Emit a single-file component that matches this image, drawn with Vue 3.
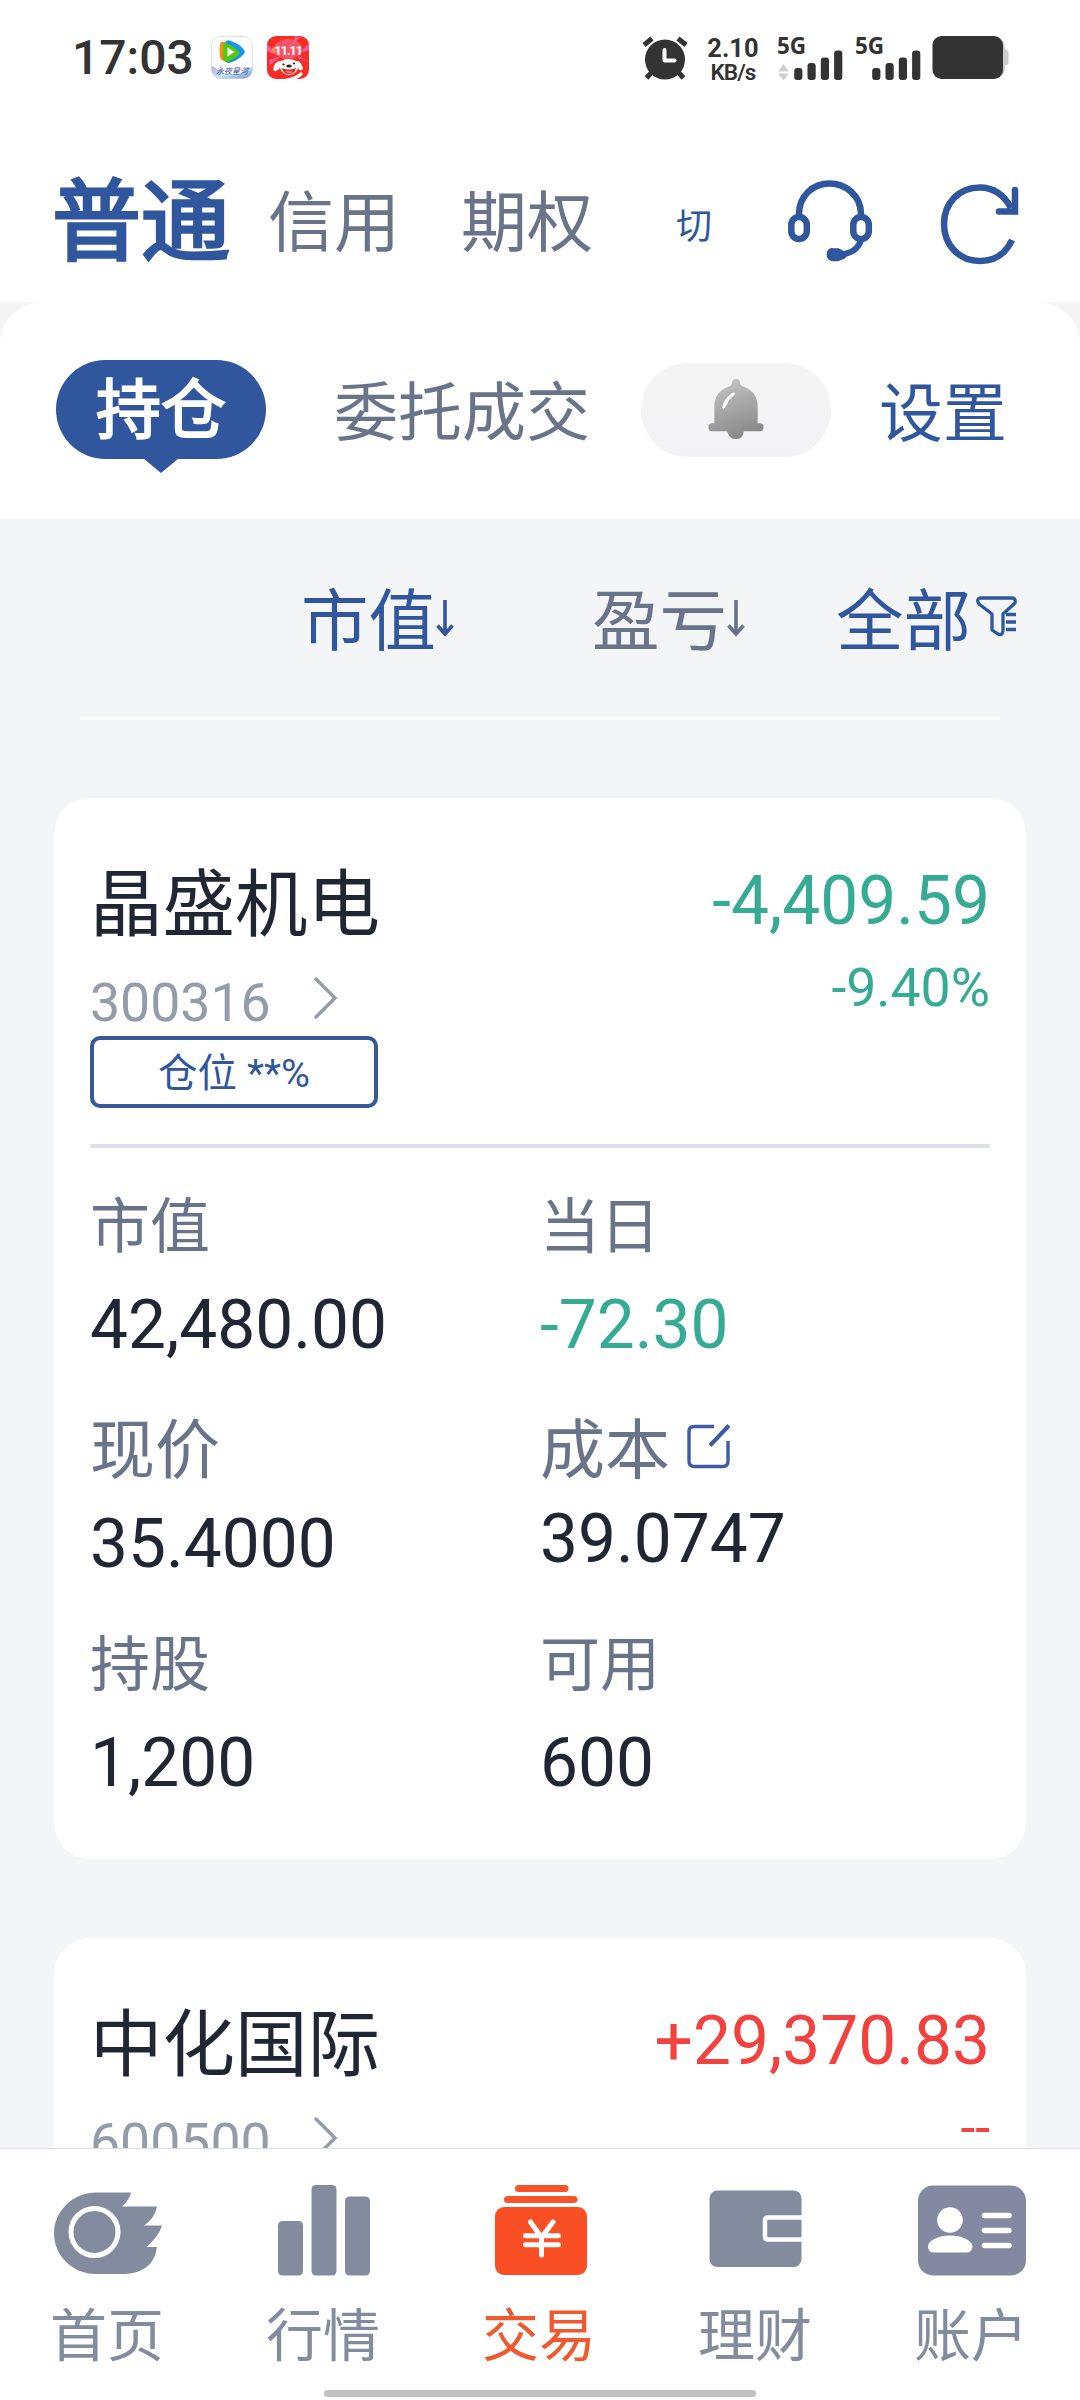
<script setup>
const bars = [12, 17, 22.5, 29.5]

const holdings = [
  {
    name: '晶盛机电',
    code: '300316',
    profit: '-4,409.59',
    rate: '-9.40%',
    trend: 'down',
    fields: [
      { label: '市值', value: '42,480.00' },
      { label: '当日', value: '-72.30', trend: 'down' },
      { label: '现价', value: '35.4000', size: 'large' },
      { label: '成本', value: '39.0747', size: 'large', edit: true },
      { label: '持股', value: '1,200' },
      { label: '可用', value: '600' },
    ],
  },
  {
    name: '中化国际',
    code: '600500',
    profit: '+29,370.83',
    rate: '--',
    trend: 'up',
    fields: [],
  },
]

const tabs = [
  { key: 'home', label: '首页' },
  { key: 'market', label: '行情' },
  { key: 'trade', label: '交易', active: true },
  { key: 'wealth', label: '理财' },
  { key: 'account', label: '账户' },
]
</script>

<template>
  <div class="screen">
    <div class="status">
      <span class="clock">17:03</span>
      <svg class="app-icon" width="42" height="43" viewBox="0 0 42 43">
        <defs>
          <clipPath id="videoClip"><rect x="0.5" y="0.5" width="41" height="42" rx="9" /></clipPath>
          <linearGradient id="wave" x1="0" x2="1" y1="0" y2="1">
            <stop offset="0" stop-color="#b9a5dc" />
            <stop offset="0.5" stop-color="#c5e6fa" />
            <stop offset="1" stop-color="#6f8fc4" />
          </linearGradient>
        </defs>
        <rect x="0.5" y="0.5" width="41" height="42" rx="9" fill="#fff" stroke="#e3e3e6" />
        <path clip-path="url(#videoClip)" d="M0 30Q5 31 8 36Q20 40 31 37Q35 31 42 31V43H0Z" fill="url(#wave)" />
        <path d="M9 8Q10 5 14 6V25Q10 25 9 21Q8 15 9 8Z" fill="#ff8a12" />
        <path d="M14 7Q15 3 20 5Q29 8 33 14Q35 16 32 19Q26 25 18 27Q14 27 14 22Z" fill="#1595ee" />
        <path d="M12 9Q13 6 17 8Q24 11 28 15Q29 16 28 18Q23 24 15 26Q12 25 12 22Z" fill="#52c90e" />
        <path d="M16.500 11.500L23.500 16L16.500 20.500Z" fill="#fff" />
        <text x="5" y="38" font-size="8" font-style="italic" fill="#2f489b">永夜星河</text>
      </svg>
      <svg class="app-icon second" width="42" height="43" viewBox="0 0 42 43">
        <defs><clipPath id="shopClip"><rect width="42" height="43" rx="9" /></clipPath></defs>
        <g clip-path="url(#shopClip)">
          <rect width="42" height="43" fill="#f52d24" />
          <path d="M0 8L12 20L0 15ZM2 24L14 20L3 29ZM30 18L42 8V14ZM28 0L25 10L33 1ZM31 22L42 26L32 20Z" fill="#f45aa2" />
          <circle cx="8" cy="14" r="3" fill="#ff9440" />
          <ellipse cx="21" cy="13" rx="14" ry="10" fill="#f46582" opacity=".7" />
          <path d="M14 25Q21 21 29 25Q34 24 36 33Q33 36 31 32Q29 38 22 39Q15 38 13 32Q9 37 6 34Q7 25 14 25Z" fill="#fff" />
          <path d="M17 43Q27 42 34 36L36 38Q32 43 28 43Z" fill="#fff" />
          <path d="M15 32Q22 35 29 32Q28 38 22 38Q16 38 15 32Z" fill="#d22625" />
          <path d="M18 35Q22 34 26 36Q22 39 18 35Z" fill="#ff806e" />
          <ellipse cx="22" cy="30" rx="2.800" ry="1.600" fill="#222" />
          <circle cx="16.500" cy="28.500" r="1.100" fill="#222" />
          <circle cx="27" cy="27.500" r="1.100" fill="#222" />
        </g>
        <text x="21" y="19" font-size="13" font-weight="700" fill="#fff" text-anchor="middle" letter-spacing="-1.200">11.11</text>
      </svg>
      <span class="spacer"></span>
      <svg class="alarm" width="46" height="44" viewBox="0 0 46 44">
        <circle cx="23" cy="23.500" r="20" fill="#333" />
        <path d="M2 9L10 2.500M44 9L36 2.500" stroke="#333" stroke-width="5" />
        <path d="M9 37L4.500 42M37 37L41.500 42" stroke="#333" stroke-width="5" />
        <path d="M22.500 14V24.500H32.500" fill="none" stroke="#fff" stroke-width="4" stroke-linecap="round" stroke-linejoin="round" />
      </svg>
      <div class="speed"><b>2.10</b><small>KB/s</small></div>
      <svg class="signal" width="66" height="56" viewBox="0 -12 66 56">
        <text x="0" y="17.500" class="gen">5G</text>
        <path d="M1 35.500L6.500 28L12 35.500ZM1 37.500H12L6.500 44.500Z" fill="#d0d0d0" />
        <rect v-for="(h, i) in bars" :key="i" :x="17.200 + i * 13.300" :y="44 - h" width="8.200" :height="h" rx="3" fill="#333" />
      </svg>
      <svg class="signal next" width="66" height="56" viewBox="0 -12 66 56">
        <text x="0" y="17.500" class="gen">5G</text>
        <rect v-for="(h, i) in bars" :key="i" :x="17.200 + i * 13.300" :y="44 - h" width="8.200" :height="h" rx="3" fill="#333" />
      </svg>
      <svg class="battery" width="77" height="43" viewBox="0 0 77 43">
        <path d="M69 4Q73 6 73 13.500H74Q76.500 14 76.500 17V26Q76.500 29 74 29.500H73Q73 38 69 40Z" fill="#ccc" />
        <rect x="0.500" width="70.500" height="43" rx="9" fill="#333" />
      </svg>
    </div>

    <header class="header">
      <span class="account on">普通</span>
      <span class="account">信用</span>
      <span class="account last">期权</span>
      <span class="switch">切</span>
      <svg class="headset" width="86" height="84" viewBox="0 0 86 84" fill="none" stroke="#30569d">
        <path d="M12 38V35C12 17 26 4.500 42.500 4.500S74 17 74 35V38" stroke-width="6.500" />
        <rect x="4.300" y="38" width="15.500" height="22" rx="7.700" stroke-width="6.500" />
        <rect x="66.300" y="38" width="15.500" height="22" rx="7.700" stroke-width="6.500" />
        <path d="M74 61C71 70 65 74.500 52 76" stroke-width="6" />
        <path d="M45 70H51L58 73.500V78.500L51 81.500H45A6.200 6.200 0 0 1 45 69.500Z" fill="#30569d" stroke-width="1.500" stroke-linejoin="round" />
      </svg>
      <svg class="refresh" width="82" height="84" viewBox="0 0 82 84" fill="none" stroke="#30569d" stroke-width="6.500">
        <path d="M72 27C65 14 55 6.500 41 6.500C20 6.500 5 22 5 43S20 80 41 80C54 80 66 74 73 59" />
        <path d="M76 9V30.500H60" stroke-linecap="round" />
      </svg>
    </header>

    <div class="sheet-back">
      <div class="sheet">
        <div class="pill">持仓</div>
        <span class="orders">委托成交</span>
        <div class="bell">
          <svg width="58" height="63" viewBox="0 0 58 64">
            <defs>
              <linearGradient id="bellFill" x1="0" x2="0.300" y1="0" y2="1">
                <stop offset="0" stop-color="#c8c8c8" />
                <stop offset="1" stop-color="#8c8c8c" />
              </linearGradient>
            </defs>
            <path d="M25 5Q25 1 29 1T33 5Q33 7 35 8Q51 13 51 29V46H53Q57 46 57 50T53 54H37Q36 62 29 62T20 54H5Q1 54 1 50T5 46H7V29Q7 13 23 8Q25 7 25 5Z" fill="url(#bellFill)" />
            <path d="M15.500 30Q17 21 25 16Q29 14 27 17Q21 21 18 29Q16 33 15.500 30Z" fill="#fff" stroke="#fff" stroke-width="1" />
          </svg>
        </div>
        <span class="setting">设置</span>
      </div>
    </div>

    <main class="content">
      <div class="sort">
        <span class="sort-item by-value">市值<svg width="18" height="38" viewBox="0 0 18 38"><path d="M9 1V35M1.500 26.500L9 35L16.500 26.500" fill="none" stroke="currentColor" stroke-width="3.600" /></svg></span>
        <span class="sort-item by-gain">盈亏<svg width="18" height="38" viewBox="0 0 18 38"><path d="M9 1V35M1.500 26.500L9 35L16.500 26.500" fill="none" stroke="currentColor" stroke-width="3.600" /></svg></span>
        <span class="sort-item">全部<svg class="funnel" width="41" height="42" viewBox="0 0 41 42" fill="none" stroke="currentColor" stroke-width="3.300"><path d="M4 2H36Q40 2 39 7L27 18V35Q26 40 22 38L16 34V18L3 8Q0 3 4 2Z" stroke-linejoin="round" /><path d="M30 18.500H40M30 26H40M30 33.500H40" /></svg></span>
      </div>
      <div class="sort-line"></div>

      <section v-for="h in holdings" :key="h.code" class="card">
        <div class="card-head">
          <div>
            <div class="name">{{ h.name }}</div>
            <div class="code">
              {{ h.code }}
              <svg width="24" height="42" viewBox="0 0 24 42"><path d="M2 2L21 21L2 40" fill="none" stroke="#949caa" stroke-width="3.400" stroke-linecap="round" /></svg>
            </div>
            <div class="tag">仓位 **%</div>
          </div>
          <div class="result" :class="h.trend">
            <div class="profit">{{ h.profit }}</div>
            <div class="rate">{{ h.rate }}</div>
          </div>
        </div>
        <div class="divider"></div>
        <div class="fields">
          <div v-for="f in h.fields" :key="f.label" class="field" :class="[f.size, { edit: f.edit }]">
            <div class="label">
              {{ f.label }}
              <svg v-if="f.edit" width="44" height="46" viewBox="0 0 44 46" fill="none" stroke="#3c5ca3" stroke-width="3.400">
                <path d="M27 3.500H7Q2 3.500 2 8.500V38Q2 43.500 7 43.500H36Q41 43.500 41 38V18" />
                <path d="M42 2.500L23 22.500" stroke-width="4" />
              </svg>
            </div>
            <div class="value" :class="f.trend">{{ f.value }}</div>
          </div>
        </div>
      </section>
    </main>

    <nav class="tabbar">
      <div v-for="t in tabs" :key="t.key" class="tab" :class="{ active: t.active }">
        <svg width="108" height="92" viewBox="0 0 108 92">
          <g v-if="t.key === 'home'">
            <path d="M42 8.500H77Q76 15 68 22.500H103Q101 34 90 41.500H108Q105 52 92.500 63H103Q100 88 71 90H42C18 90 0 71 0 49.500S18 8.500 42 8.500Z" fill="#838b9e" />
            <circle cx="40.500" cy="48" r="23.500" fill="none" stroke="#fff" stroke-width="5" />
          </g>
          <g v-else-if="t.key === 'market'" fill="#838b9e">
            <rect x="8" y="37" width="25" height="54.500" rx="4.500" />
            <rect x="41.500" y="1" width="25" height="90.500" rx="4.500" />
            <rect x="75" y="12.500" width="25" height="79" rx="4.500" />
          </g>
          <g v-else-if="t.key === 'trade'">
            <rect x="29" y="1" width="53.500" height="7" rx="3.500" fill="#f9532b" />
            <rect x="18" y="12" width="73.500" height="7" rx="3.500" fill="#f9532b" />
            <rect x="9" y="23" width="92" height="68" rx="9" fill="#fa4e25" />
            <path d="M44.500 38L55.500 53.500L67 38M55.500 53.500V71M39.500 51.700H72.500M39.500 60.700H72.500" fill="none" stroke="#fff" stroke-width="5" stroke-linecap="round" />
          </g>
          <g v-else-if="t.key === 'wealth'">
            <rect x="7.500" y="6.500" width="92" height="76.500" rx="8" fill="#838b9e" />
            <path d="M100 33.500H66Q63 33.500 63 36.500V52.500Q63 55.500 66 55.500H100" fill="none" stroke="#fff" stroke-width="4.500" />
          </g>
          <g v-else>
            <rect y="1.500" width="108" height="90" rx="15" fill="#8389a0" />
            <circle cx="32" cy="36" r="12.800" fill="#fff" />
            <path d="M10 63C10 56 21 51.500 32 51.500S54.500 56 54.500 63Q54 68.500 48 68.500H16Q10.500 68.500 10 63Z" fill="#fff" />
            <path d="M66.500 31.500H91M66.500 46.500H91M66.500 61.500H91" stroke="#fff" stroke-width="5.500" stroke-linecap="round" />
          </g>
        </svg>
        <span>{{ t.label }}</span>
      </div>
      <i class="indicator"></i>
    </nav>
  </div>
</template>

<style>
body { margin: 0; background: #fff; }
</style>

<style scoped>
.screen {
  width: 1080px;
  height: 2400px;
  display: flex;
  flex-direction: column;
  overflow: hidden;
  background: #fff;
  color: #202633;
  font-family: Roboto, "Noto Sans CJK SC", sans-serif;
  white-space: nowrap;
}
svg { display: block; flex: none; }
.status {
  height: 110px;
  flex: none;
  display: flex;
  align-items: flex-start;
  padding: 36px 71px 0 72px;
  box-sizing: border-box;
  color: #333;
}
.clock { width: 139px; font-size: 48px; line-height: 43px; font-weight: 500; }
.app-icon.second { margin-left: 14px; }
.spacer { flex: 1; }
.alarm { margin-right: 18px; }
.speed { width: 54px; display: flex; flex-direction: column; align-items: center; margin-right: 17px; }
.speed b { font-size: 25.500px; line-height: 24px; font-weight: 700; }
.speed small { font-size: 22.500px; line-height: 24px; font-weight: 600; letter-spacing: -0.900px; }
.gen { font: 700 22.500px "Noto Sans", sans-serif; fill: #333; }
.signal { margin-top: -12px; }
.signal.next { margin-left: 12px; }
.battery { margin-left: 11px; }

.header { height: 192px; flex: none; display: flex; align-items: center; padding: 36px 0 0 53px; box-sizing: border-box; }
.account { width: 193px; font-size: 66px; line-height: 90px; color: #697389; }
.account.on { width: 216px; margin-left: -1px; padding-bottom: 3px; font-size: 89px; color: #30569d; -webkit-text-stroke: 3px #30569d; }
.account.last { width: 215px; }
.switch { width: 111px; font-size: 36px; line-height: 40px; color: #30569d; padding-top: 5px; }
.headset { margin-top: -6px; }
.refresh { margin: -3px 0 0 66px; }

.sheet-back { flex: none; background: #f4f4f4; }
.sheet { height: 217px; display: flex; align-items: center; padding: 0 0 2px 56px; box-sizing: border-box; background: #fff; border-radius: 42px 42px 0 0; }
.pill { position: relative; width: 210px; height: 99px; margin-right: 68px; border-radius: 50px; background: #30569d; color: #fff; font-size: 65px; line-height: 103px; text-align: center; -webkit-text-stroke: 2px #fff; }
.pill::after { content: ""; position: absolute; left: 87px; top: 98px; border: 18px solid transparent; border-top: 15px solid #30569d; border-bottom: 0; }
.orders { width: 307px; font-size: 64px; line-height: 80px; color: #697389; padding-top: 8px; }
.bell { width: 190px; height: 94px; border-radius: 47px; background: linear-gradient(#f4f4f4, #f3f3f6); display: flex; align-items: center; justify-content: center; margin-right: 48px; }
.setting { font-size: 64px; line-height: 80px; color: #30569d; padding-top: 11px; }

.content { flex: 1; min-height: 0; overflow: hidden; background: #f3f5f7; }
.sort { height: 198px; display: flex; align-items: center; padding: 7px 0 0 301px; box-sizing: border-box; }
.sort-item { display: flex; align-items: center; font-size: 67.500px; line-height: 80px; color: #30569d; }
.sort-item.by-value { width: 291px; }
.sort-item.by-gain { width: 244px; color: #697389; }
.sort-item svg { margin-top: -8px; }
.sort-item .funnel { margin: -10px 0 0 5px; }
.sort-line { height: 3px; margin: 0 80px; background: #fff; }

.card { height: 1061px; margin: 78px 54px 0; padding: 68px 36px 0; box-sizing: border-box; border-radius: 36px; background: #fff; }
.card + .card { margin-top: 79px; }
.card-head { display: flex; justify-content: space-between; height: 278px; }
.name { font-size: 72.500px; line-height: 80px; }
.code { display: flex; align-items: center; font-size: 53.600px; line-height: 60px; margin-top: 27px; color: #949caa; }
.code svg { margin: -10px 0 0 43px; }
.tag { width: 288px; height: 72px; margin-top: 3px; box-sizing: border-box; border: 4px solid #375998; border-radius: 10px; color: #30569d; font-size: 39.500px; line-height: 68px; text-align: center; }
.result { text-align: right; margin-top: -5px; }
.profit { font-size: 67.600px; line-height: 80px; }
.rate { font-size: 53.600px; line-height: 60px; margin-top: 17px; }
.down { color: #36ab94; }
.up { color: #f14240; }
.divider { height: 4px; background: #dfe1e8; }
.fields { display: grid; grid-template-columns: 450px 450px; grid-template-rows: 223px 215px 216px; padding-top: 50px; }
.label { display: flex; align-items: center; font-size: 60px; line-height: 60px; color: #697389; }
.large .label { font-size: 65px; }
.label svg { margin: -10px 0 0 17px; }
.value { margin-top: 27px; font-size: 67.600px; line-height: 80px; }
.large .value { margin-top: 23px; }
.edit .value { margin-top: 18px; }

.tabbar { position: relative; flex: none; height: 252px; box-sizing: border-box; border-top: 1px solid #dcdee1; background: #fff; display: flex; }
.tab { width: 216px; display: flex; flex-direction: column; align-items: center; padding-top: 35px; color: #838b9e; font-size: 57px; line-height: 60px; }
.tab span { margin: 31px 2px 0 0; }
.tab.active { color: #ee5a2f; }
.indicator { position: absolute; left: 324px; bottom: 3px; width: 432px; height: 7px; border-radius: 4px; background: #c1c1c1; }
</style>
